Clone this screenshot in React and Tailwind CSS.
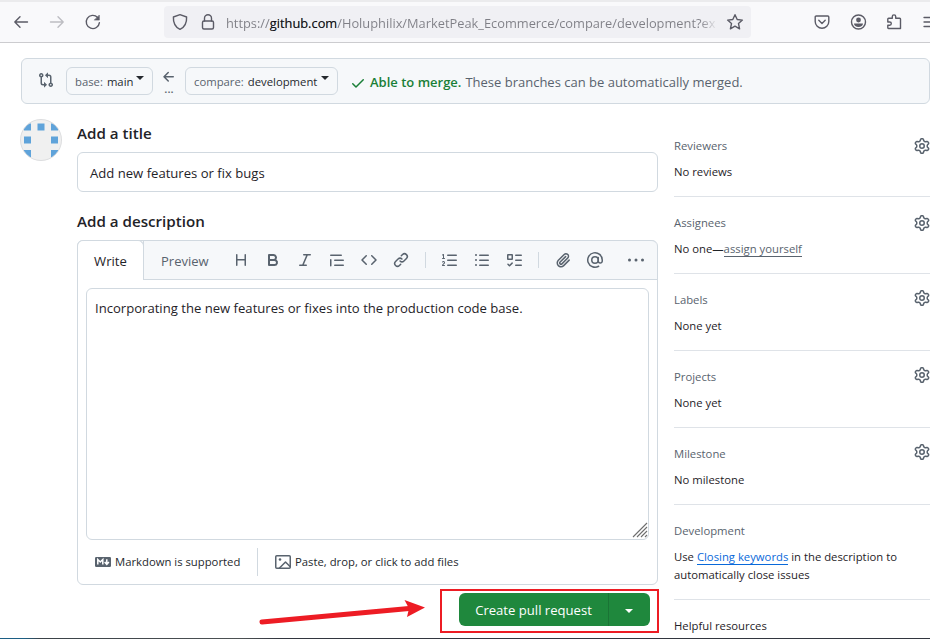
const PATHS = {
  compare: "M9.573.677A.25.25 0 0 1 10 .854V2.5h1A2.5 2.5 0 0 1 13.5 5v5.628a2.251 2.251 0 1 1-1.5 0V5a1 1 0 0 0-1-1h-1v1.646a.25.25 0 0 1-.427.177L7.177 3.427a.25.25 0 0 1 0-.354ZM6 12v-1.646a.25.25 0 0 1 .427-.177l2.396 2.396a.25.25 0 0 1 0 .354l-2.396 2.396A.25.25 0 0 1 6 15.146V13.5H5A2.5 2.5 0 0 1 2.5 11V5.372a2.25 2.25 0 1 1 1.5 0V11a1 1 0 0 0 1 1ZM4 3.25a.75.75 0 1 0-1.5 0 .75.75 0 0 0 1.5 0ZM12.75 12a.75.75 0 1 0 0 1.5.75.75 0 0 0 0-1.5Z",
  arrowLeft: "M7.78 12.53a.75.75 0 0 1-1.06 0L2.47 8.28a.75.75 0 0 1 0-1.06l4.25-4.25a.751.751 0 0 1 1.042.018.751.751 0 0 1 .018 1.042L4.81 7h7.44a.75.75 0 0 1 0 1.5H4.81l2.97 2.97a.75.75 0 0 1 0 1.06Z",
  check: "M13.78 4.22a.75.75 0 0 1 0 1.06l-7.25 7.25a.75.75 0 0 1-1.06 0L2.22 9.28a.751.751 0 0 1 .018-1.042.751.751 0 0 1 1.042-.018L6 10.94l6.72-6.72a.75.75 0 0 1 1.06 0Z",
  heading: "M3.75 2a.75.75 0 0 1 .75.75V7h7V2.75a.75.75 0 0 1 1.5 0v10.5a.75.75 0 0 1-1.5 0V8.5h-7v4.75a.75.75 0 0 1-1.5 0V2.75A.75.75 0 0 1 3.75 2Z",
  bold: "M4 2h4.5a3.501 3.501 0 0 1 2.852 5.53A3.499 3.499 0 0 1 9.5 14H4a1 1 0 0 1-1-1V3a1 1 0 0 1 1-1Zm1 7v3h4.5a1.5 1.5 0 0 0 0-3Zm3.5-2a1.5 1.5 0 0 0 0-3H5v3Z",
  italic: "M6 2.75A.75.75 0 0 1 6.75 2h6.5a.75.75 0 0 1 0 1.5h-2.505l-3.858 9H9.25a.75.75 0 0 1 0 1.5h-6.5a.75.75 0 0 1 0-1.5h2.505l3.858-9H6.75A.75.75 0 0 1 6 2.75Z",
  quote: "M1.75 2.5h10.5a.75.75 0 0 1 0 1.5H1.75a.75.75 0 0 1 0-1.5Zm4 5h8.5a.75.75 0 0 1 0 1.5h-8.5a.75.75 0 0 1 0-1.5Zm0 5h8.5a.75.75 0 0 1 0 1.5h-8.5a.75.75 0 0 1 0-1.5ZM2.5 7.75v6a.75.75 0 0 1-1.5 0v-6a.75.75 0 0 1 1.5 0Z",
  code: "m11.28 3.22 4.25 4.25a.75.75 0 0 1 0 1.06l-4.25 4.25a.749.749 0 0 1-1.275-.326.749.749 0 0 1 .215-.734L13.94 8l-3.72-3.72a.749.749 0 0 1 .326-1.275.749.749 0 0 1 .734.215Zm-6.56 0a.751.751 0 0 1 1.042.018.751.751 0 0 1 .018 1.042L2.06 8l3.72 3.72a.749.749 0 0 1-.326 1.275.749.749 0 0 1-.734-.215L.47 8.53a.75.75 0 0 1 0-1.06Z",
  link: "m7.775 3.275 1.25-1.25a3.5 3.5 0 1 1 4.95 4.95l-2.5 2.5a3.5 3.5 0 0 1-4.95 0 .751.751 0 0 1 .018-1.042.751.751 0 0 1 1.042-.018 1.998 1.998 0 0 0 2.83 0l2.5-2.5a2.002 2.002 0 0 0-2.83-2.83l-1.25 1.25a.751.751 0 0 1-1.042-.018.751.751 0 0 1-.018-1.042Zm-4.69 9.64a1.998 1.998 0 0 0 2.83 0l1.25-1.25a.751.751 0 0 1 1.042.018.751.751 0 0 1 .018 1.042l-1.25 1.25a3.5 3.5 0 1 1-4.95-4.95l2.5-2.5a3.5 3.5 0 0 1 4.95 0 .751.751 0 0 1-.018 1.042.751.751 0 0 1-1.042.018 1.998 1.998 0 0 0-2.83 0l-2.5 2.5a1.998 1.998 0 0 0 0 2.83Z",
  ordered: "M5 3.25a.75.75 0 0 1 .75-.75h8.5a.75.75 0 0 1 0 1.5h-8.5A.75.75 0 0 1 5 3.25Zm0 5a.75.75 0 0 1 .75-.75h8.5a.75.75 0 0 1 0 1.5h-8.5A.75.75 0 0 1 5 8.25Zm0 5a.75.75 0 0 1 .75-.75h8.5a.75.75 0 0 1 0 1.5h-8.5a.75.75 0 0 1-.75-.75ZM.924 10.32a.5.5 0 0 1-.851-.525l.001-.001.001-.002.002-.004.007-.011c.097-.144.215-.273.348-.384.228-.19.588-.392 1.068-.392.468 0 .858.181 1.126.484.259.294.377.673.377 1.038 0 .987-.686 1.495-1.156 1.845l-.047.035c-.303.225-.522.4-.654.597h1.357a.5.5 0 0 1 0 1H.5a.5.5 0 0 1-.5-.5c0-1.005.692-1.52 1.167-1.875l.035-.025c.531-.396.8-.625.8-1.078a.57.57 0 0 0-.128-.376C1.806 10.068 1.695 10 1.5 10a.658.658 0 0 0-.429.163.835.835 0 0 0-.144.153ZM2.003 2.5V6h.503a.5.5 0 0 1 0 1H.5a.5.5 0 0 1 0-1h.503V3.308l-.28.14a.5.5 0 0 1-.446-.895l1.003-.5a.5.5 0 0 1 .723.447Z",
  unordered: "M5.75 2.5h8.5a.75.75 0 0 1 0 1.5h-8.5a.75.75 0 0 1 0-1.5Zm0 5h8.5a.75.75 0 0 1 0 1.5h-8.5a.75.75 0 0 1 0-1.5Zm0 5h8.5a.75.75 0 0 1 0 1.5h-8.5a.75.75 0 0 1 0-1.5ZM2 14a1 1 0 1 1 0-2 1 1 0 0 1 0 2Zm1-6a1 1 0 1 1-2 0 1 1 0 0 1 2 0ZM2 4a1 1 0 1 1 0-2 1 1 0 0 1 0 2Z",
  tasks: "M2 2h4a1 1 0 0 1 1 1v4a1 1 0 0 1-1 1H2a1 1 0 0 1-1-1V3a1 1 0 0 1 1-1Zm4.655 8.595a.75.75 0 0 1 0 1.06L4.03 14.28a.75.75 0 0 1-1.06 0l-1.5-1.5a.749.749 0 0 1 .326-1.275.749.749 0 0 1 .734.215l.97.97 2.095-2.095a.75.75 0 0 1 1.06 0ZM9.75 2.5h5.5a.75.75 0 0 1 0 1.5h-5.5a.75.75 0 0 1 0-1.5Zm0 5h5.5a.75.75 0 0 1 0 1.5h-5.5a.75.75 0 0 1 0-1.5Zm0 5h5.5a.75.75 0 0 1 0 1.5h-5.5a.75.75 0 0 1 0-1.5Zm-7.25-9v3h3v-3Z",
  clip: "M12.212 3.02a1.753 1.753 0 0 0-2.478.003l-5.83 5.83a3.007 3.007 0 0 0-.88 2.127c0 .795.315 1.551.88 2.116.567.567 1.333.89 2.126.89.79 0 1.548-.321 2.116-.89l5.48-5.48a.75.75 0 0 1 1.061 1.06l-5.48 5.48a4.492 4.492 0 0 1-3.177 1.33c-1.2 0-2.345-.487-3.187-1.33a4.483 4.483 0 0 1-1.32-3.177c0-1.195.475-2.341 1.32-3.186l5.83-5.83a3.25 3.25 0 0 1 5.553 2.297c0 .863-.343 1.691-.953 2.301L7.439 12.39c-.375.377-.884.59-1.416.593a1.998 1.998 0 0 1-1.412-.593 1.992 1.992 0 0 1 0-2.828l5.48-5.48a.751.751 0 0 1 1.042.018.751.751 0 0 1 .018 1.042l-5.48 5.48a.492.492 0 0 0 0 .707.499.499 0 0 0 .352.154.51.51 0 0 0 .356-.154l5.833-5.827a1.755 1.755 0 0 0 0-2.481Z",
  kebab: "M0 8a1.5 1.5 0 1 0 3 0 1.5 1.5 0 1 0-3 0Zm6.5 0a1.5 1.5 0 1 0 3 0 1.5 1.5 0 1 0-3 0ZM13 8a1.5 1.5 0 1 0 3 0 1.5 1.5 0 1 0-3 0Z",
  gear: "M8 0a8.2 8.2 0 0 1 .701.031C9.444.095 9.99.645 10.16 1.29l.288 1.107c.018.066.079.158.212.224.231.114.454.243.668.386.123.082.233.09.299.071l1.103-.303c.644-.176 1.392.021 1.82.63.27.385.506.792.704 1.218.315.675.111 1.422-.364 1.891l-.814.806c-.049.048-.098.147-.088.294.016.257.016.515 0 .772-.01.147.038.246.088.294l.814.806c.475.469.679 1.216.364 1.891a7.977 7.977 0 0 1-.704 1.217c-.428.61-1.176.807-1.82.63l-1.102-.302c-.067-.019-.177-.011-.3.071a5.909 5.909 0 0 1-.668.386c-.133.066-.194.158-.211.224l-.29 1.106c-.168.646-.715 1.196-1.458 1.26a8.006 8.006 0 0 1-1.402 0c-.743-.064-1.289-.614-1.458-1.26l-.289-1.106c-.018-.066-.079-.158-.212-.224a5.738 5.738 0 0 1-.668-.386c-.123-.082-.233-.09-.299-.071l-1.103.303c-.644.176-1.392-.021-1.82-.63a8.12 8.12 0 0 1-.704-1.218c-.315-.675-.111-1.422.363-1.891l.815-.806c.05-.048.098-.147.088-.294a6.214 6.214 0 0 1 0-.772c.01-.147-.038-.246-.088-.294l-.815-.806C.635 6.045.431 5.298.746 4.623a7.92 7.92 0 0 1 .704-1.217c.428-.61 1.176-.807 1.82-.63l1.102.302c.067.019.177.011.3-.071.214-.143.437-.272.668-.386.133-.066.194-.158.211-.224l.29-1.106C6.009.645 6.556.095 7.299.03 7.53.01 7.764 0 8 0Zm-.571 1.525c-.036.003-.108.036-.137.146l-.289 1.105c-.147.561-.549.967-.998 1.189-.173.086-.34.183-.5.29-.417.278-.97.423-1.529.27l-1.103-.303c-.109-.03-.175.016-.195.045-.22.312-.412.644-.573.99-.014.031-.021.11.059.19l.815.806c.411.406.562.957.53 1.456a4.709 4.709 0 0 0 0 .582c.032.499-.119 1.05-.53 1.456l-.815.806c-.081.08-.073.159-.059.19.162.346.353.677.573.989.02.03.085.076.195.046l1.102-.303c.56-.153 1.113-.008 1.53.27.161.107.328.204.501.29.447.222.85.629.997 1.189l.289 1.105c.029.109.101.143.137.146a6.6 6.6 0 0 0 1.142 0c.036-.003.108-.036.137-.146l.289-1.105c.147-.561.549-.967.998-1.189.173-.086.34-.183.5-.29.417-.278.97-.423 1.529-.27l1.103.303c.109.029.175-.016.195-.045.22-.313.411-.644.573-.99.014-.031.021-.11-.059-.19l-.815-.806c-.411-.406-.562-.957-.53-1.456a4.709 4.709 0 0 0 0-.582c-.032-.499.119-1.05.53-1.456l.815-.806c.081-.08.073-.159.059-.19a6.464 6.464 0 0 0-.573-.989c-.02-.03-.085-.076-.195-.046l-1.102.303c-.56.153-1.113.008-1.53-.27a4.44 4.44 0 0 0-.501-.29c-.447-.222-.85-.629-.997-1.189l-.289-1.105c-.029-.11-.101-.143-.137-.146a6.6 6.6 0 0 0-1.142 0ZM11 8a3 3 0 1 1-6 0 3 3 0 0 1 6 0ZM9.5 8a1.5 1.5 0 1 0-3.001.001A1.5 1.5 0 0 0 9.5 8Z",
};

function Octicon({ name, className = "" }) {
  return (
    <svg viewBox="0 0 16 16" className={`h-4 w-4 shrink-0 fill-current ${className}`}>
      <path d={PATHS[name]} />
    </svg>
  );
}

function Stroke({ children, className = "", width = 1.4 }) {
  return (
    <svg
      viewBox="0 0 16 16"
      className={`h-4 w-4 shrink-0 overflow-visible ${className}`}
      fill="none"
      stroke="currentColor"
      strokeWidth={width}
      strokeLinecap="round"
      strokeLinejoin="round"
    >
      {children}
    </svg>
  );
}

function Caret({ className = "" }) {
  return (
    <svg viewBox="0 0 8 4" className={`h-1 w-2 shrink-0 fill-current ${className}`}>
      <path d="M0 0h8L4 4z" />
    </svg>
  );
}

function BrowserBar() {
  return (
    <header className="flex h-[43px] items-center border-t-2 border-b border-t-[#ebebed] border-b-[#cccccf] bg-[#f9f9fb] pl-[13px] text-[#5b5b66]">
      <Stroke>
        <path d="M14.5 8H1.8M7 2.8 1.8 8 7 13.2" />
      </Stroke>
      <Stroke className="ml-5 text-[#bdbdc2]">
        <path d="M1.5 8h12.7M9 2.8 14.2 8 9 13.2" />
      </Stroke>
      <Stroke className="ml-5">
        <path d="M14.4 8.6A6.6 6.6 0 1 1 12.6 3.4" />
        <path d="M14.3 1.4v4.7H9.6z" fill="currentColor" strokeWidth="0.6" />
      </Stroke>
      <div className="ml-[63px] flex h-8 w-[587px] items-center rounded bg-[#f0f0f4] pr-2 pl-2">
        <Stroke>
          <path d="M8 .7 14.6 3c.3 5.7-1.4 9.9-6.6 12.4C2.8 12.9 1.1 8.7 1.4 3z" />
        </Stroke>
        <Stroke className="ml-3">
          <rect x="2.5" y="7" width="11" height="8" rx="1.5" />
          <path d="M4.5 7V4.2a3.500 3.500 0 0 1 7 0V7" />
        </Stroke>
        <div className="ml-[10px] w-[493px] bg-[linear-gradient(to_right,#7f7f86_474px,#f0f0f4_492px)] bg-clip-text pt-0.5 text-[12.84px] leading-5 whitespace-nowrap text-transparent">
          https://<span className="text-[#15141a]">github.com</span>/Holuphilix/MarketPeak_Ecommerce/compare/development?ex
        </div>
        <Stroke className="ml-2">
          <path d="m8 .7 2.2 4.8 5.2.6-3.9 3.5 1.1 5.2L8 12.2l-4.6 2.6 1.1-5.2L.6 6.1l5.2-.6z" />
        </Stroke>
      </div>
      <Stroke className="ml-[63px]">
        <path d="M2.200 2h11.600c.6 0 1 .4 1 1v4.500a6.800 6.800 0 0 1-13.600 0V3c0-.6.4-1 1-1z" />
        <path d="M4.800 6.300 8 9.400l3.200-3.100" />
      </Stroke>
      <Stroke className="ml-5">
        <circle cx="8.5" cy="8" r="7" />
        <circle cx="8.5" cy="6" r="2.4" fill="currentColor" stroke="none" />
        <path d="M4 9.500h9c0 2-2 3.500-4.500 3.500S4 11.500 4 9.500z" fill="currentColor" stroke="none" />
      </Stroke>
      <Stroke className="ml-5">
        <path d="M3 4.200H6.300V2.600a1.700 1.700 0 0 1 3.400 0v1.600h4c.5 0 .8.300.8.800v9.500H2.500c-.4 0-.7-.3-.7-.7v-2.600h1.900a1.600 1.600 0 0 0 0-3.200H1.800V5c0-.5.4-.8.8-.8z" />
      </Stroke>
      <Stroke className="ml-5" width={1.3}>
        <path d="M2 3.500h13M2 8h13M2 12.500h13" />
      </Stroke>
    </header>
  );
}

function BranchButton({ label, branch, className, caretClass }) {
  return (
    <button className={`flex h-7 items-center rounded-md border border-[#d1d9e0] bg-[#f6f8fa] text-[11.3px] ${className}`}>
      <span className="mr-1 pt-0.5 pl-2 text-[#59636e]">{label}</span>
      <span className="pt-0.5 font-medium text-[#25292e]">{branch}</span>
      <Caret className={`mb-1.5 text-[#25292e] ${caretClass}`} />
    </button>
  );
}

function CompareBar() {
  return (
    <div className="mt-[15px] ml-[21px] flex h-[46px] items-center rounded-md border border-[#d1d9e0] bg-[#f6f8fa] text-[#59636e]">
      <Octicon name="compare" className="mb-[3px] ml-4" />
      <BranchButton label="base:" branch="main" className="ml-3 w-[87px]" caretClass="ml-[3px]" />
      <div className="ml-2 flex h-7 w-4 flex-col items-center">
        <Octicon name="arrowLeft" className="mt-0.5" />
        <span className="-mt-[2px] text-[11.3px] leading-[12px] font-semibold">...</span>
      </div>
      <BranchButton label="compare:" branch="development" className="ml-2 w-[153px]" caretClass="ml-1" />
      <Octicon name="check" className="mt-[3px] ml-3 text-[#1a7f37]" />
      <span className="ml-1 pt-[3px] text-[13px] font-semibold text-[#1a7f37]">Able to merge.</span>
      <span className="ml-1 pt-[3px] text-[13px]">These branches can be automatically merged.</span>
    </div>
  );
}

function Avatar() {
  return (
    <svg viewBox="0 0 42 42" className="mt-[15px] ml-5 h-[42px] w-[42px] shrink-0">
      <clipPath id="round">
        <circle cx="21" cy="21" r="20.5" />
      </clipPath>
      <g clipPath="url(#round)">
        <rect width="42" height="42" fill="#f0f0f0" />
        <path
          fill="#5fa3da"
          d="M4 4.500h7v7H4zM17.500 4.500h7v7h-7zM31 4.500h7v7h-7zM4 17.500h7v7H4zM31 17.500h7v7h-7zM4 31h7v7H4zM31 31h7v7h-7z"
        />
      </g>
      <circle cx="21" cy="21" r="20.5" fill="none" stroke="#dcdddf" />
    </svg>
  );
}

function Toolbar() {
  return (
    <div className="flex h-[39px] items-stretch text-[#59636e]">
      <div className="-mt-px -ml-px flex w-[67px] items-center justify-center rounded-t-md border border-b-0 border-[#d1d9e0] bg-white pt-0.5 text-[13.1px] text-[#1f2328]">
        Write
      </div>
      <div className="-mt-px -ml-px flex flex-1 items-center rounded-tr-md border-t border-b border-l border-[#d1d9e0] bg-[#f6f8fa]">
        <span className="ml-[17px] w-[72px] pt-[3px] text-[13px]">Preview</span>
        <div className="flex items-center gap-4">
          <Octicon name="heading" />
          <Octicon name="bold" />
          <Octicon name="italic" />
          <Octicon name="quote" />
          <Octicon name="code" />
          <Octicon name="link" />
        </div>
        <div className="ml-4 h-4 w-px bg-[#d1d9e0]" />
        <div className="ml-4 flex items-center gap-4">
          <Octicon name="ordered" />
          <Octicon name="unordered" />
          <Octicon name="tasks" />
        </div>
        <div className="ml-4 h-4 w-px bg-[#d1d9e0]" />
        <Octicon name="clip" className="ml-4" />
        <Stroke className="ml-4" width={1.5}>
          <circle cx="8" cy="8" r="3.25" />
          <path d="M11.250 5.500V9a1.750 1.750 0 0 0 4 0V8a7.250 7.250 0 1 0-3.600 6.270" />
        </Stroke>
        <Octicon name="kebab" className="mb-px ml-[25px]" />
      </div>
    </div>
  );
}

function Editor() {
  return (
    <div className="mt-[7px] flex h-[345px] shrink-0 flex-col rounded-md border border-[#d1d9e0]">
      <Toolbar />
      <div className="mx-2 mt-2 flex h-[252px] flex-col justify-between rounded-md border border-[#d1d9e0]">
        <p className="pt-[9px] pl-2 text-[13.1px] leading-5 text-[#1f2328]">
          Incorporating the new features or fixes into the production code base.
        </p>
        <svg viewBox="0 0 16 16" className="mb-px h-4 w-4 self-end" stroke="#6e6e6e" strokeWidth="1.1">
          <path d="M1 15 15 1M5 15 15 5M9 15l6-6M13 15l2-2" />
        </svg>
      </div>
      <div className="flex flex-1 items-center pl-[17px] text-[11.3px] text-[#25292e]">
        <svg viewBox="0 0 16 16" className="h-4 w-4 text-[#59636e]">
          <rect y="3" width="16" height="10" rx="1.2" fill="currentColor" />
          <path d="M2.800 10.500v-5L5.300 8l2.500-2.500v5M11.800 5.300V10M9.700 8l2.100 2.300L13.900 8" fill="none" stroke="#fff" strokeWidth="1.5" />
        </svg>
        <span className="ml-1 w-[142px] pt-px">Markdown is supported</span>
        <div className="h-7 w-px bg-[#d1d9e0]" />
        <Stroke className="ml-[17px] text-[#59636e]" width={1.5}>
          <rect x=".75" y="1.75" width="14.5" height="12.5" rx="1" />
          <circle cx="5" cy="5.5" r="1.3" fill="currentColor" stroke="none" />
          <path d="m4.500 14 6-6 4.500 4.500" />
        </Stroke>
        <span className="ml-1 pt-px">Paste, drop, or click to add files</span>
      </div>
    </div>
  );
}

function Section({ title, gear = true, gearClass = "", className = "h-[77px]", children }) {
  return (
    <section className={`border-b border-[#dfe3e8] pt-[17px] text-[11.3px] leading-[18px] ${className}`}>
      <div className="flex h-[18px] items-center justify-between text-[#59636e]">
        <h3 className="font-medium">{title}</h3>
        {gear && <Octicon name="gear" className={gearClass} />}
      </div>
      <div className="mt-2 text-[#1f2328]">{children}</div>
    </section>
  );
}

function Sidebar() {
  return (
    <aside className="ml-4 flex-1 pt-4">
      <Section title="Reviewers">No reviews</Section>
      <Section title="Assignees">
        No one—<span className="border-b border-[#59636e] text-[#59636e]">assign yourself</span>
      </Section>
      <Section title="Labels" gearClass="-mt-1">None yet</Section>
      <Section title="Projects" gearClass="-mt-1">None yet</Section>
      <Section title="Milestone" gearClass="-mt-1">No milestone</Section>
      <Section title="Development" gear={false} className="h-[95px]">
        Use <span className="border-b border-[#0969da] text-[#0969da]">Closing keywords</span> in the description to automatically close issues
      </Section>
      <h3 className="pt-[17px] text-[11.3px] leading-[18px] font-medium text-[#1f2328]">Helpful resources</h3>
    </aside>
  );
}

export default function App() {
  return (
    <div className="relative flex h-[639px] w-[930px] flex-col overflow-hidden bg-white font-['Open_Sans','Noto_Sans',sans-serif] text-[#1f2328]">
      <BrowserBar />
      <CompareBar />
      <div className="flex flex-1">
        <Avatar />
        <main className="ml-[15px] flex w-[581px] flex-col">
          <h2 className="mt-[17px] text-[15.15px] leading-6 font-semibold">Add a title</h2>
          <div className="mt-[7px] flex h-10 items-center rounded-md border border-[#d1d9e0] px-3 pt-1 text-[13.1px]">
            Add new features or fix bugs
          </div>
          <h2 className="mt-[17px] text-[15.15px] leading-6 font-semibold">Add a description</h2>
          <Editor />
          <div className="mt-2 mr-2 flex h-[33px] self-end rounded-md bg-[#1f883d] text-[13.1px] font-medium text-white">
            <button className="flex w-[150px] items-center justify-center border-r border-[#1a7435] pt-0.5">Create pull request</button>
            <button className="flex w-[41px] items-center justify-center pt-0.5 pr-px">
              <Caret />
            </button>
          </div>
        </main>
        <Sidebar />
      </div>
      <svg viewBox="0 0 400 54" className="pointer-events-none absolute top-[585px] left-[259px] h-[54px] w-[400px]">
        <rect x="182" y="5" width="217" height="42" fill="none" stroke="#ed1c24" strokeWidth="2" />
        <path d="M3 37 150 23.500" stroke="#ed1c24" strokeWidth="5" strokeLinecap="round" />
        <path d="M145.500 15l20.500 7.500-18 9.500 2-8.500z" fill="#ed1c24" />
      </svg>
      <div className="absolute inset-x-0 bottom-0 h-px bg-[linear-gradient(to_right,#1c5f85_0,#1c5f85_24px,#3a4248_40px,#4d5254_240px,#32363f_280px)]" />
    </div>
  );
}
